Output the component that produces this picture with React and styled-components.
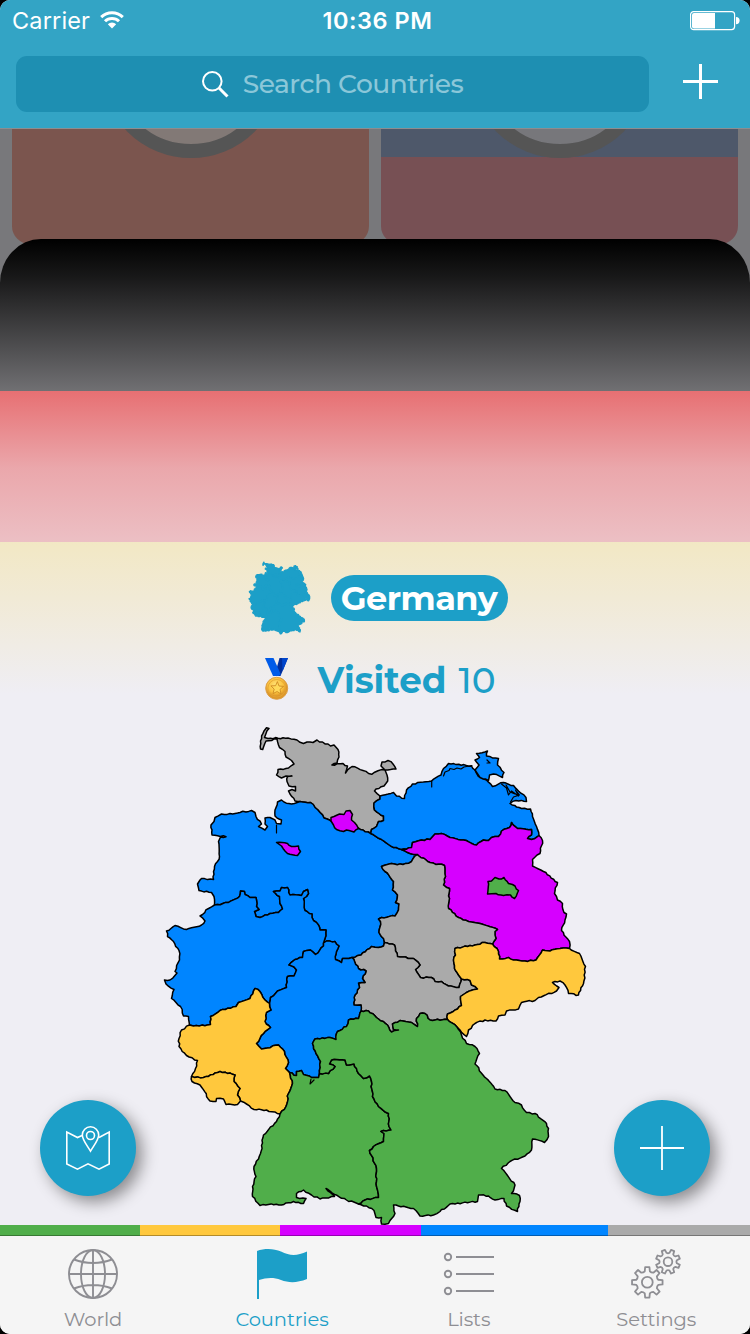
import React from 'react';
import styled, { createGlobalStyle } from 'styled-components';

const BLUE = '#1c9fc8';
const GRAY = '#8e8e93';

const Global = createGlobalStyle`
  * { box-sizing: border-box; }
  html, body { margin: 0; background: #000; }
  body { width: 750px; height: 1334px; overflow: hidden; font-family: Montserrat, Inter, "Liberation Sans", sans-serif; }
  svg { display: block; flex: none; overflow: visible; }
`;

/* ---------- map data: borders shared by neighbouring states ---------- */
const B = {
  shNorth: '277,739 266,741 262.7,749.5 260.5,749 260.5,741 264,731 266.5,727.7 269,728.5 266,733.5 264.5,737.5 268,738.5 288,738 297,740 303.5,743.5 307,742 313,742.5 317,740 319.5,742 328,744 330.5,746 334,745 338,749.5 339,757 337,763 332,765 343,763.5 347.5,766 345.5,773 347.5,770 352,766.5 363,770.5 371.7,774.3 378,770.7 385,770 381,766 382,762 388,760.5 393,764 396,769 385,770 387,775 387.7,781 384,786 376,789 374.5,791 380,796',
  shMv: '380,796 380,799 374,803 374.5,810 379,813.5 383.5,816 383.5,820.5 378.5,821.5 376.5,826.5 371.5,829.5 370.7,833.5',
  shNi: '370.7,833.5 363,830 358,828 346,825 331,821 324,818 320,812.5 315,807.5 310.5,802.5 300,801.5',
  shWest: '300,801.5 295,801 290,794 288.5,791 292,789.5 295.5,791 295.5,786.5 289,786 287,781.5 287.5,776.5 292,776 286,776 281.5,778 276.5,775 278,769.5 288.5,768 294,764 291.5,760.5 286,757 285,751.5 279.5,747.5 277,739',
  niCoast: '300,801.5 291.5,804 284,802 281.5,800 277.5,802 275,810 275,816 279,819 281.5,820 281,824 276.5,823.5 275,820 270,817.5 265,818 265,824 267.5,826.5 265,830 258.5,826.5 261.5,824 256,816.5 255,812.5 251.5,810.5 240,812.5 230,813.5 221.5,814 215,817.5 214,821.5 211,825 212,835 226,836.7 220.5,837 218.5,841.5 219.5,856.5 217.5,861.5 214.5,866.5 213.5,879.5 201.5,878.5 200,880 197.5,884 199,890.5 211.5,892.5 214,896.5 214.5,905',
  niNw: '214.5,905 228.5,902.5 239.5,896.5 240.5,891 244.5,891.5 245,894.5 250,897.5 256,897.5 256.5,906.5 259,909.5 254.5,911.5 256,916.5 260,917.5 270,913.5 278.5,912.5 282.5,909 280,903.5 279.5,896.5 273.5,891.5 280,891 281.5,887.5 287.5,887.5 290,895 301.5,895.5 303.5,891.5 307.5,889.5 308.5,893.5 303.5,898.5 305,910.5 312,914 313.5,920.5 318.5,925 320,930 326,930 325,938.5 323.5,943',
  niHe: '323.5,943 326.5,941 335,941.5 339,946 336.5,951.5 335.5,959.5 341.5,962.5 342.5,958.5 352,957.5',
  niTh: '352,957.5 361,955 371.5,946.5 378.5,947.5 383.5,946 384.5,942.5',
  niSt: '384.5,942.5 383.5,938.5 379,932.5 380.5,921.5 378.5,919 381.5,917.5 395,916 398.5,910 399,904 395.5,902.5 397.5,895 392.5,890 393.5,881.5 385,871.5 381.5,866.5 391.5,863.5 403,864.5 411.5,861.5 414.5,856.5 417.3,854.5',
  niBb: '417.3,854.5 410,853.5 401.5,849.5',
  niMv: '401.5,849.5 393.5,847.5 381.5,839.5 370.7,833.5',
  mvBb: '401.5,849.5 411.5,847.5 412.5,842.5 421.5,840 430,839.5 435,834 441.5,833.5 450,837.5 463.5,840 476.5,845 483.5,840 488.5,840.5 491.5,837.5 498.5,836.5 501.5,831 509.5,827.5 511.5,822.5 517.5,828.5 531.5,829.5 531.5,835 527.5,838.5 531.5,839.5 539,835.5',
  mvCoast: '380,796 393.5,792.5 396.5,796 404.5,798.5 406.5,790 412.5,784 431.5,781 441,775 443.5,768.5 448.5,763.5 471.5,766 475,770 478.5,776.5 486.5,780 492.5,786.5 503.5,782.5 513.5,785.5 518.5,791 526,797.5 526.5,801.5 516,800.5 510,803.5 521.5,808.5 530.5,809 532.5,816.5 536.5,826.5 539,835.5',
  bbEast: '539,835.5 542.5,840.5 540,853.5 532.5,859.5 532.5,866 543.5,871.5 557.5,882.5 554.5,893.5 557.5,900 562.5,903.5 564,912.5 566.5,914 565,920 561.5,930.5 569.5,941.5 569.5,948.5',
  bbSn: '569.5,948.5 560,948.5 550,951 542.5,950 536,960 525,961 513.5,960 508.5,957.5 499.5,959 498.5,951.5 492.5,944',
  bbSt: '492.5,944 496,938.5 495,931.5 497.5,929.5 480,923.5 468.5,921.5 458.5,917.5 448.5,908.5 449.5,888.5 443.5,885 445.5,876.5 444.5,865.5 430,862.5 417.3,854.5',
  stSn: '492.5,944 485,942.5 475,945 455,948.5 455.5,955 453.5,960 454.5,968.5 458.5,975 461.5,979',
  thSt: '384.5,942.5 394.5,945 397.5,956.5 413.5,958.5 420,965 415.5,969.5 420.5,977.5 431.5,977.5 435,981.5 441.5,981.5 448.5,986 459,987.5 461,981.5 461.5,979',
  thSn: '461.5,979 470,980.5 471.5,985 477.5,989 466.5,992.5 460.5,996.5 461.5,1005.5 455,1010 447.5,1014 447.5,1019.5',
  thBy: '447.5,1019.5 430,1020 425,1013.5 420,1013.5 416.5,1018.5 417.5,1026.5 411.5,1022.5 400,1020.5 392.5,1024 393.5,1029.5 398.5,1030 391.5,1032 387.5,1025 378.5,1019 368.5,1011 361,1011',
  thHe: '361,1011 361,1005 354,1005 355,995 359.5,987.5 358.5,983 365,982.5 362.5,978.5 366,971 358.5,968.5 352,957.5',
  heBy: '361,1011 358.5,1018.5 348.5,1020 346.5,1026.5 337.5,1031.5 336,1039.5 330,1037.5 315,1039 312.5,1043.5 316,1053.5 320.5,1061.5 319.5,1073.5',
  heBw: '319.5,1073.5 318.5,1077.5 311.5,1077.5 303.5,1074.5 301.5,1070.5 296.5,1071.5 296.5,1075.5 289.5,1072.5',
  heRp: '289.5,1072.5 285.5,1068.5 288.5,1062.5 284.5,1051.5 278.5,1045 261.5,1049 256.5,1043.5 263.5,1033.5 270.5,1027.5 265,1021.5 266.5,1012.5 271,1010 269.5,1003.5',
  heNw: '269.5,1003.5 270.5,997.5 277.5,991 286.5,987.5 287.5,976.5 294,976 296.5,970 294,967 289,965 295,959.5 302.5,957.5 303.5,951.5 310.5,950 315.5,954.5 323.5,946 323.5,943',
  nwWest: '214.5,905 208.5,908.5 200,916 205,921 201.5,925 186.5,929.5 175,925.5 166.5,931 167.5,936.5 173.5,941.5 179,950.5 179.5,960 175,971.5 177,973 170,980 164.5,980 166,984 174,989.5 171.5,998.5 180.5,1006.5 183.5,1016 188.5,1016.5 189.5,1025',
  nwRp: '189.5,1025 193.5,1026 210.5,1024.5 210.5,1016.5 220,1010.5 236,1006.5 238.5,1002.5 250,998.5 255,988.5 260,991.5 265,1000 269.5,1003.5',
  rpWest: '189.5,1025 181.5,1030 179,1038.5 179,1046.5 186.5,1055.5 197.5,1060.5 195.5,1068.5 191.5,1076.5',
  rpSl: '191.5,1076.5 203.5,1077.5 220,1071.5 235,1075 234,1081.5 240,1088.5 237.5,1095 240.5,1101',
  slOuter: '191.5,1076.5 192,1081.5 200,1085 210,1101 216,1101.5 216.5,1098.5 223.5,1099 226,1104.5 237.5,1104.5 240.5,1101',
  rpSouth: '240.5,1101 246.5,1104 254,1109.5 266.5,1110 280,1114',
  rpBw: '289.5,1072.5 292.5,1083.5 288.5,1093.5 286,1106.5 280,1114',
  bwWest: '280,1114 276.5,1121.5 263.5,1135 260.5,1153.5 254,1166.5 256,1176.5 252.5,1186.5 252.5,1196.5 260,1205.5 268.5,1204.5 281.5,1205 293.5,1201.5 303.5,1203.5 306,1198.5 296.5,1197.5 296.5,1193.5 303.5,1190 311.5,1195 320,1199 334.5,1196.5 326,1188.5 334.5,1194.5 346.5,1200 358.5,1204',
  bwBy: '319.5,1073.5 328.5,1073.5 335,1066.5 329.5,1064 331.5,1060 345,1060 346.5,1065 354,1064 358.5,1073.5 363.5,1078.5 369.5,1076 371.5,1081.5 372.5,1096.5 378.5,1106.5 388.5,1113.5 389,1126.5 391,1130 381,1131.5 384,1133.5 383.5,1141.5 373.5,1146.5 369.5,1150.5 376.5,1168.5 376.5,1186.5 378.5,1197.5 365,1200 358.5,1204',
  snBy: '447.5,1019.5 457,1027',
  snOuter: '569.5,948.5 579.5,953.5 585.5,966.5 583.5,983.5 578.5,995 568.5,993.5 565,985 560,981 552.5,982.5 559,987.5 556.5,991 538.5,997.5 535,1000.5 521.5,1002.5 518.5,1009 506.5,1011 505,1015 498.5,1016 496,1021 485,1020 475,1023.5 468.5,1030 466.5,1036.5 460,1030 457,1027',
  byOuter: '457,1027 461.5,1035 466.5,1043.5 475,1046.5 479.5,1053.5 475,1064 486.5,1078.5 495,1089 505,1090.5 515,1102.5 521.5,1105 526.5,1112.5 535,1113.5 546.5,1123.5 548.5,1128.5 548.5,1136.5 544.5,1142.5 532.5,1139 531.5,1150 525,1156 510,1161.5 501.5,1168.5 515,1185 511.5,1193.5 519.5,1195.5 520,1201.5 517.5,1211.5 506.5,1206 504,1198.5 495,1200 488.5,1196 478.5,1195 477.5,1201.5 450,1204 440,1211.5 433.5,1215 420,1216 413.5,1208.5 393.5,1205 395,1213.5 388.5,1223.5 381.5,1224 381.5,1217.5 376,1217.5 374,1210.5 366.5,1206 358.5,1204',
  hamburg: '331,817.5 334,816.5 339.5,814 344,814.5 346,811 350,810.5 352.5,814.5 351.5,820 354.5,822.5 358.5,828.5 354,832 346.5,830 343.5,831.5 336.5,829.5 333.5,825 331,821',
  bremen: '276.5,842.5 287.5,843.5 291.5,846.5 298.5,846 300.5,851.5 297.5,855.5 287.5,853.5 281.5,846',
  berlin: '487.5,894 488,881.5 491.5,881 495,877.5 499,879 504,877.5 508.5,883.5 512.5,884.5 518.5,890.5 514.5,898.5 510.5,895 503.5,895.5 496,893.5',
  ruegen: '475,770 479,765 475,760 479.5,757.5 476.5,753.5 487.5,751 486.5,756 498.5,758.5 497.5,765 504,772.5 502.5,777.5 493.5,774 489.5,775 488.5,780.5 480,777.5',
};

const STATES = [
  ['gray', 'shNorth shMv shNi shWest'],
  ['blue', 'shNi niCoast niNw niHe niTh niSt niBb niMv'],
  ['blue', 'mvCoast -mvBb niMv -shMv'],
  ['blue', 'ruegen'],
  ['violet', 'mvBb bbEast bbSn bbSt niBb'],
  ['gray', 'niSt -bbSt stSn -thSt'],
  ['gray', 'niTh thSt thSn thBy thHe'],
  ['yellow', 'bbSn stSn thSn snBy -snOuter'],
  ['blue', 'niNw -heNw -nwRp -nwWest'],
  ['blue', 'niHe -thHe heBy heBw heRp heNw'],
  ['yellow', 'rpWest rpSl rpSouth -rpBw heRp -nwRp'],
  ['yellow', 'rpSl -slOuter'],
  ['green', 'heBw rpBw bwWest -bwBy'],
  ['green', 'thBy heBy bwBy -byOuter -snBy'],
  ['violet', 'hamburg'],
  ['violet', 'bremen'],
  ['green', 'berlin'],
];

const COLORS = { green: '#50ae4a', yellow: '#ffc83d', violet: '#d600ff', blue: '#0085ff', gray: '#aaaaaa' };

/* adds small deterministic kinks so that long runs look like a real border */
const cache = {};
function border(name) {
  if (cache[name]) return cache[name];
  const pts = B[name].split(' ').map((p) => p.split(',').map(Number));
  const out = [pts[0]];
  for (let i = 1; i < pts.length; i++) {
    const [x0, y0] = pts[i - 1];
    const [x1, y1] = pts[i];
    const len = Math.hypot(x1 - x0, y1 - y0);
    const n = Math.floor(len / 2.5);
    for (let k = 1; k < n; k++) {
      const s = Math.sin(x0 * 12.9 + y0 * 78.2 + k * 37.7) * 43758.5;
      const d = (s - Math.floor(s) - 0.5) * 1.5;
      const t = k / n;
      out.push([x0 + (x1 - x0) * t - ((y1 - y0) / len) * d, y0 + (y1 - y0) * t + ((x1 - x0) / len) * d]);
    }
    out.push(pts[i]);
  }
  return (cache[name] = out);
}

const outline = (names) => {
  const pts = names.split(' ').flatMap((n) => (n[0] === '-' ? [...border(n.slice(1))].reverse() : border(n)));
  return 'M' + pts.map(([x, y]) => x.toFixed(1) + ' ' + y.toFixed(1)).join('L') + 'Z';
};
const SHAPES = STATES.map(([color, names]) => ({ color: COLORS[color], d: outline(names) }));

const StateMap = () => (
  <svg width="750" height="505" viewBox="0 720 750 505" strokeLinejoin="round" strokeLinecap="round">
    <g stroke="#000" strokeWidth="1.5">
      {SHAPES.map((s, i) => <path key={i} d={s.d} fill={s.color} />)}
      <path fill="none" strokeWidth="1.2" d="M276.5 833V825M431.7 781v6M443.5 776l1.5-4 4-1.5 1-2 4 1 3-1.5 4 1 3-2 8-1.5M501.5 784l5 4 2 7 3-4 7 5-3-6 4 5-6 2-3 5M506 785l4 7 5 2M311 1079l-1 5 4-4M487 760l3 3h-3" />
    </g>
  </svg>
);

const CountryGlyph = () => (
  <svg width="61" height="72" viewBox="164 727 423 498">
    <g fill={BLUE} stroke={BLUE} strokeWidth="9" strokeLinejoin="round">
      {SHAPES.map((s, i) => <path key={i} d={s.d} />)}
    </g>
  </svg>
);

/* ---------- icons ---------- */
const Wifi = () => (
  <svg width="24" height="18" viewBox="0 0 24 18" fill="none" stroke="#fff" strokeWidth="3">
    <path d="M1.2 6.1A15.4 15.4 0 0 1 22.8 6.1M5 10.3A10 10 0 0 1 19 10.3" />
    <path d="M12 17.5L7.8 13.2A6 6 0 0 1 16.2 13.2Z" fill="#fff" stroke="none" />
  </svg>
);
const Battery = () => (
  <svg width="49" height="20" viewBox="0 0 49 20">
    <rect x=".6" y=".6" width="44" height="18" rx="3" fill="none" stroke="#fff" strokeWidth="1.2" />
    <path d="M4 2h21v15.6H4a2 2 0 0 1-2-2V4a2 2 0 0 1 2-2Z" fill="#fff" />
    <path d="M46 6a3.6 3.6 0 0 1 0 7.2Z" fill="#fff" />
  </svg>
);
const SearchIcon = () => (
  <svg width="27" height="27" viewBox="0 0 27 27" fill="none" stroke="#fff">
    <circle cx="10.3" cy="10.3" r="9.3" strokeWidth="2" />
    <path d="M16.8 16.8L25.5 25.5" strokeWidth="3" />
  </svg>
);
const Medal = () => (
  <svg width="24" height="42" viewBox="0 0 24 42">
    <defs>
      <radialGradient id="gold" cx=".45" cy=".35"><stop offset="0" stopColor="#ffe278" /><stop offset=".7" stopColor="#fbc13d" /><stop offset="1" stopColor="#dd972a" /></radialGradient>
    </defs>
    <path d="M14.5 0H23L15.5 18H9.5Z" fill="#002e9c" />
    <path d="M0 0H8.5L15.8 16.5 13.5 18H8Z" fill="#005be8" />
    <path d="M17 0H23L17.5 13.5Z" fill="#0046cc" />
    <circle cx="11.7" cy="30.3" r="11" fill="url(#gold)" stroke="#dda047" strokeWidth="1" />
    <circle cx="11.7" cy="30.3" r="8.8" fill="none" stroke="#e4a536" strokeWidth=".9" />
    <path d="M12.4 23.6l1.6 4.4 4.6.4-3.6 3 1 4.6-3.9-2.5-4.1 2.1 1.2-4.5-3.3-3.2 4.7-.2Z" fill="#ffd95a" stroke="#cf8a22" strokeWidth=".9" strokeLinejoin="round" />
  </svg>
);
const MapPin = () => (
  <svg width="44" height="44" viewBox="0 0 44 44" fill="none" stroke="#fff" strokeWidth="1.6">
    <path d="M16 9.5L11.5 11.5.8 6V38L11.5 43.2 22 37.8 33 43.2 43.2 38V6L33 11.5" />
    <path d="M24.5 25.2C21.5 20 16.3 13.8 16.3 9A8.2 8.2 0 0 1 32.7 9C32.7 13.8 27.5 20 24.5 25.2Z" />
    <circle cx="24.5" cy="9.5" r="4" />
  </svg>
);
const Plus = ({ size, weight }) => (
  <svg width={size} height={size} viewBox={`0 0 ${size} ${size}`} stroke="#fff" strokeWidth={weight}>
    <path d={`M${size / 2} 0V${size}M0 ${size / 2}H${size}`} />
  </svg>
);
const Globe = () => (
  <svg width="50" height="50" viewBox="0 0 50 50" fill="none" stroke={GRAY} strokeWidth="1.9">
    <circle cx="25" cy="25" r="24" />
    <ellipse cx="25" cy="25" rx="12" ry="24" />
    <path d="M25 1V49M1 25H49M6 10.5Q15 14 25 14T44 10.5M6 39.5Q15 36 25 36T44 39.5" />
  </svg>
);
const Flag = () => (
  <svg width="50" height="50" viewBox="0 0 50 50" fill={BLUE}>
    <path d="M0 2C8-1 17-.5 24 2.5C33 7 40 7 50 2.5V30C40 34 32 34 24 31C16 28 9 29 2 31V50H0Z" />
  </svg>
);
const ListIcon = () => (
  <svg width="50" height="50" viewBox="0 0 50 50" fill="none" stroke={GRAY} strokeWidth="1.9">
    {[8, 25, 42].map((y) => <g key={y}><circle cx="4" cy={y} r="3.2" /><path d={`M12 ${y}H50`} /></g>)}
  </svg>
);
function gear(cx, cy, r, root, turn) {
  const at = (rad, deg) => {
    const a = (deg * Math.PI) / 180;
    return `${(cx + rad * Math.cos(a)).toFixed(2)} ${(cy + rad * Math.sin(a)).toFixed(2)}`;
  };
  let d = '';
  for (let i = 0; i < 8; i++) {
    const a = i * 45 + turn;
    d += `${i ? 'L' : 'M'}${at(root, a - 13)}L${at(r, a - 8)}L${at(r, a + 8)}L${at(root, a + 13)}Q${at(root - 1, a + 22.5)} ${at(root, a + 32)}`;
  }
  return d + 'Z';
}
const Gears = () => (
  <svg width="50" height="50" viewBox="0 0 50 50" fill="none" stroke={GRAY} strokeWidth="1.8" strokeLinejoin="round">
    <path d={gear(16.3, 33.3, 15.4, 11.3, 0)} />
    <circle cx="16.3" cy="33.3" r="5.4" />
    <path d={gear(37, 12.7, 12.2, 9, 22.5)} />
    <circle cx="37" cy="12.7" r="4.3" />
  </svg>
);

/* ---------- layout ---------- */
const Screen = styled.div`
  width: 750px; height: 1334px; display: flex; flex-direction: column;
  overflow: hidden; border-radius: 10px; background: #f5f5f5;
`;
const Header = styled.header`
  height: 129px; flex: none; background: #33a4c5; border-bottom: 1px solid #8c8d90; color: #fff;
`;
const StatusBar = styled.div`
  height: 42px; padding: 0 11px 0 12px; display: grid; grid-template-columns: 1fr auto 1fr;
  align-items: center; font: 400 23.5px Inter, sans-serif;
  span { display: block; padding-bottom: 2px; }
`;
const Carrier = styled.div`
  display: flex; align-items: center; gap: 10px; letter-spacing: .15px;
  svg { margin-top: -2px; }
`;
const Clock = styled.span`font-weight: 600; font-size: 23.5px; padding-left: 4px; letter-spacing: .55px;`;
const Power = styled.div`display: flex; justify-content: flex-end;`;
const SearchRow = styled.div`
  display: flex; align-items: center; justify-content: space-between; padding: 14px 32px 0 16px;
`;
const SearchBox = styled.div`
  width: 633px; height: 56px; border-radius: 11px; background: #1e8fb2; color: #8bc7d9;
  display: flex; align-items: center; justify-content: center; gap: 14px;
  font-size: 26.5px; font-weight: 500; letter-spacing: -.5px;
  span { padding-bottom: 2px; }
`;
const AddButton = styled.div`margin-top: -5px;`;
const Backdrop = styled.div`
  height: 170px; margin-bottom: -60px; flex: none; overflow: hidden; padding: 0 12px;
  display: grid; grid-template-columns: 1fr 1fr; gap: 12px; background: #78787b;
`;
const FlagCard = styled.div`
  height: 115px; border-radius: 0 0 18px 18px; background: ${(p) => p.$fill};
  display: flex; justify-content: center; overflow: hidden;
`;
const Ring = styled.div`
  width: 180px; height: 180px; margin-top: -151px; flex: none; border-radius: 50%;
  border: 14px solid #555; background: ${(p) => p.$fill};
`;
const Sheet = styled.section`
  position: relative; flex: 1; border-radius: 41px 41px 0 0 / 44px 44px 0 0; overflow: hidden;
  display: flex; flex-direction: column; align-items: center;
  background:
    linear-gradient(rgba(239,238,244,0) 0, rgba(239,238,244,.1) 38px, rgba(239,238,244,.465) 151px, rgba(239,238,244,.7) 229px, rgba(239,238,244,.805) 303px, #efeef4 455px),
    linear-gradient(#000 152px, #e00000 152px 303.5px, #ffce00 303.5px 460px, #efeef4 460px);
`;
const TitleRow = styled.div`
  margin-top: 323px; height: 72px; padding-left: 7px; display: flex; align-items: center; gap: 21px;
`;
const NamePill = styled.div`
  width: 177px; height: 46px; border-radius: 23px; background: ${BLUE}; color: #fff; padding-right: 1px;
  display: flex; align-items: center; justify-content: center; font-size: 33.5px; font-weight: 700; letter-spacing: -.5px;
`;
const VisitedRow = styled.div`
  margin-top: 23px; height: 44px; padding-left: 11px; display: flex; align-items: center; gap: 28px;
  color: ${BLUE}; font-size: 35.7px;
`;
const Count = styled.span`font-weight: 500; margin-left: 12px;`;
const Label = styled.div`font-weight: 700; white-space: nowrap; padding-top: 2px;`;
const MapArea = styled.div`margin-top: 19px;`;
const Fab = styled.div`
  position: absolute; bottom: 29px; ${(p) => p.$side}: 40px; width: 96px; height: 96px; border-radius: 50%;
  background: ${BLUE}; display: flex; align-items: center; justify-content: center;
  box-shadow: 6px 6px 16px rgba(0,0,0,.42);
`;
const Strip = styled.div`height: 11px; flex: none; display: flex;`;
const Share = styled.div`flex: ${(p) => p.$n} 0 0; background: ${(p) => p.$c}; border-bottom: 1px solid rgba(0,0,0,.3);`;
const TabBar = styled.nav`height: 98px; flex: none; display: grid; grid-template-columns: repeat(4, 1fr); background: #f5f5f5;`;
const Tab = styled.div`
  display: flex; flex-direction: column; align-items: center; gap: 8px;
  padding: 13px ${(p) => (p.$nudge < 0 ? 1.5 : 0)}px 0 ${(p) => (p.$nudge > 0 ? 1.5 : 0)}px;
  color: ${(p) => (p.$active ? BLUE : GRAY)}; font-size: 19.5px; font-weight: 400; line-height: 24px;
  letter-spacing: -.1px;
`;

export default function App() {
  return (
    <>
      <Global />
      <Screen>
        <Header>
          <StatusBar>
            <Carrier><span>Carrier</span><Wifi /></Carrier>
            <Clock>10:36 PM</Clock>
            <Power><Battery /></Power>
          </StatusBar>
          <SearchRow>
            <SearchBox><SearchIcon /><span>Search Countries</span></SearchBox>
            <AddButton><Plus size={35} weight={3} /></AddButton>
          </SearchRow>
        </Header>
        <Backdrop>
          <FlagCard $fill="#7b554e"><Ring $fill="#827976" /></FlagCard>
          <FlagCard $fill="linear-gradient(#4e586a 28px, #775054 28px)"><Ring $fill="#77777b" /></FlagCard>
        </Backdrop>
        <Sheet>
          <TitleRow><CountryGlyph /><NamePill>Germany</NamePill></TitleRow>
          <VisitedRow><Medal /><Label>Visited<Count>10</Count></Label></VisitedRow>
          <MapArea><StateMap /></MapArea>
          <Fab $side="left"><MapPin /></Fab>
          <Fab $side="right"><Plus size={44} weight={1.8} /></Fab>
        </Sheet>
        <Strip>
          <Share $n={139.6} $c={COLORS.green} />
          <Share $n={140.6} $c={COLORS.yellow} />
          <Share $n={140.6} $c={COLORS.violet} />
          <Share $n={187.2} $c={COLORS.blue} />
          <Share $n={142} $c={COLORS.gray} />
        </Strip>
        <TabBar>
          <Tab $nudge={-1}><Globe /><span>World</span></Tab>
          <Tab $nudge={1} $active><Flag /><span>Countries</span></Tab>
          <Tab><ListIcon /><span>Lists</span></Tab>
          <Tab><Gears /><span>Settings</span></Tab>
        </TabBar>
      </Screen>
    </>
  );
}
